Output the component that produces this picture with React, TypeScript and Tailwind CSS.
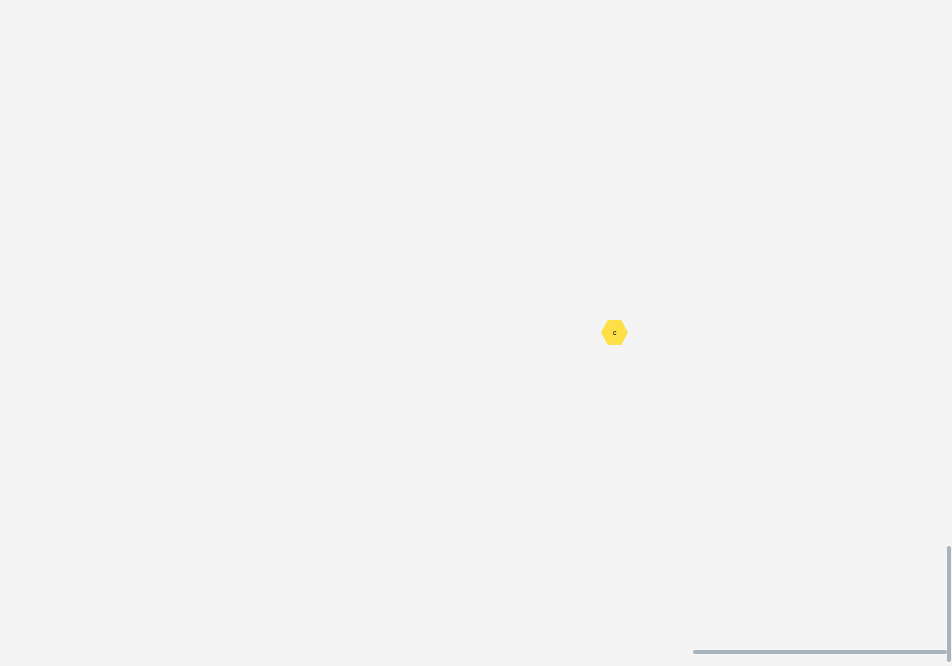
export default function App() {
  return (
    <div className="relative h-[666px] w-[952px] overflow-hidden bg-[#f4f4f4] font-['Liberation_Sans',sans-serif]">
      {/* canvas node */}
      <div className="absolute left-[601px] top-[320px] flex h-[25px] w-[27px] items-center justify-center bg-[#fde047] [clip-path:polygon(25%_0,75%_0,100%_50%,75%_100%,25%_100%,0_50%)]">
        <span className="text-[7px] leading-none text-black">c</span>
      </div>

      {/* scrollbars */}
      <div className="absolute left-[693px] top-[650px] h-[4px] w-[254px] rounded-full bg-[#a9b3bc]" />
      <div className="absolute left-[947px] top-[546px] h-[116px] w-[4px] rounded-full bg-[#a9b3bc]" />
    </div>
  );
}
